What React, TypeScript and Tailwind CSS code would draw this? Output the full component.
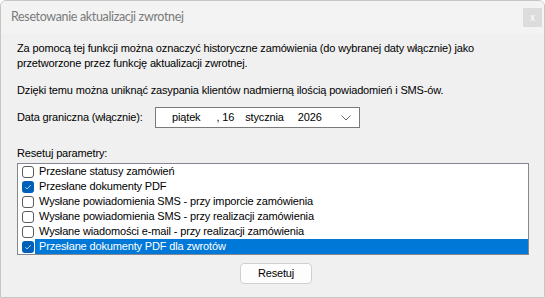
import React, { useState } from 'react';

const options = [
  { label: 'Przesłane statusy zamówień', checked: false },
  { label: 'Przesłane dokumenty PDF', checked: true },
  { label: 'Wysłane powiadomienia SMS - przy imporcie zamówienia', checked: false },
  { label: 'Wysłane powiadomienia SMS - przy realizacji zamówienia', checked: false },
  { label: 'Wysłane wiadomości e-mail - przy realizacji zamówienia', checked: false },
  { label: 'Przesłane dokumenty PDF dla zwrotów', checked: true },
];

function CheckBox({ checked }: { checked: boolean }) {
  if (checked) {
    return (
      <div className="w-[12px] h-[12px] rounded-[3px] bg-[#005fb8] flex items-center justify-center shrink-0">
        <svg width="8" height="8" viewBox="0 0 8 8" fill="none">
          <path d="M1.3 4.2 L3.1 6 L6.8 2" stroke="#c9dcf0" strokeWidth="0.9" />
        </svg>
      </div>
    );
  }
  return <div className="w-[12px] h-[12px] rounded-[3px] border border-[#5c5c5c] bg-white shrink-0" />;
}

export default function App() {
  const [selected] = useState(5);

  return (
    <div
      className="w-[545px] h-[298px] bg-[#f0f0f0] border border-[#c6c6c6] rounded-t-[6px] flex flex-col overflow-hidden text-black"
      style={{ fontFamily: '"Liberation Sans", Arial, sans-serif' }}
    >
      {/* Title bar */}
      <div className="h-[33px] bg-[#f3f3f3] flex items-center justify-between pl-[10px] pr-[2px] shrink-0">
        <span
          className="text-[12.5px] tracking-[-0.35px] text-[#7a7a7a]"
          style={{ fontFamily: 'Lato, "Noto Sans", sans-serif' }}
        >
          Resetowanie aktualizacji zwrotnej
        </span>
        <div className="w-[19px] h-[19px] bg-[#dcdcdc] text-white text-[10px] flex items-center justify-center leading-none">
          x
        </div>
      </div>

      <div className="flex flex-col pl-[16px] pr-[15px] text-[11px] tracking-[-0.15px]">
        <p className="mt-[7px] leading-[15px]">
          Za pomocą tej funkcji można oznaczyć historyczne zamówienia (do wybranej daty włącznie) jako
          <br />
          przetworzone przez funkcję aktualizacji zwrotnej.
        </p>
        <p className="mt-[12px] leading-[15px]">
          Dzięki temu można uniknąć zasypania klientów nadmierną ilością powiadomień i SMS-ów.
        </p>

        <div className="mt-[9px] flex items-center h-[21px]">
          <span className="w-[138px]">Data graniczna (włącznie):</span>
          <div className="w-[205px] h-[21px] bg-white border border-[#7a7a7a] flex items-center relative">
            <span className="ml-[16px]">piątek</span>
            <span className="ml-[16px]">, 16</span>
            <span className="ml-[11px]">stycznia</span>
            <span className="ml-[14px]">2026</span>
            <svg className="absolute right-[8px] top-[7px]" width="10" height="6" viewBox="0 0 10 6" fill="none">
              <path d="M0.5 0.5 L5 5 L9.5 0.5" stroke="#6a6a6a" strokeWidth="1" />
            </svg>
          </div>
        </div>

        <div className="mt-[18px] leading-[15px]">Resetuj parametry:</div>

        <div className="mt-[2px] border border-[#828790] bg-white flex flex-col">
          {options.map((o, i) => (
            <div key={o.label} className="h-[15px] flex items-center pl-[4px]">
              <CheckBox checked={o.checked} />
              <div
                className={
                  'ml-[1px] h-[15px] flex-1 flex items-center pl-[4px] ' +
                  (i === selected ? 'bg-[#0078d7] text-white' : '')
                }
              >
                {o.label}
              </div>
            </div>
          ))}
        </div>

        <div className="mt-[8px] flex justify-center">
          <button className="ml-[6px] w-[72px] h-[21px] bg-[#fdfdfd] border border-[#d0d0d0] rounded-[4px] text-[11px] flex items-center justify-center">
            Resetuj
          </button>
        </div>
      </div>
    </div>
  );
}
